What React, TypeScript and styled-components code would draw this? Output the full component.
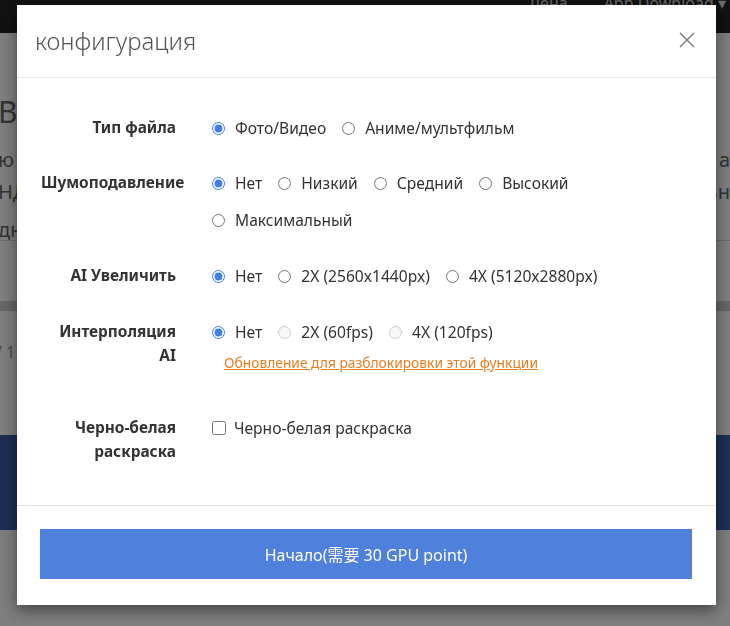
import React from 'react'
import styled, { createGlobalStyle } from 'styled-components'

const GlobalStyle = createGlobalStyle`
  html, body {
    margin: 0;
    padding: 0;
  }
  body {
    width: 730px;
    height: 626px;
    overflow: hidden;
    font-family: "Noto Sans", "Noto Sans CJK SC", sans-serif;
    background: #fff;
  }
`

/* page behind the dialog */
const Page = styled.div`
  width: 730px;
  height: 626px;
  overflow: hidden;
`

const TopBar = styled.div`
  height: 33px;
  background: #242424;
  display: flex;
  justify-content: flex-end;
  align-items: flex-start;
  gap: 36px;
  padding-right: 4px;
  overflow: hidden;
`

const NavItem = styled.span`
  color: #d8d8d8;
  font-size: 16px;
  line-height: 16px;
  margin-top: -5px;
  white-space: nowrap;
`

const Hero = styled.div`
  padding-top: 62px;
  height: 145px;
`

const HeroLine = styled.div<{ $size: number; $top: number }>`
  display: flex;
  justify-content: space-between;
  font-size: ${p => p.$size}px;
  line-height: ${p => p.$size + 4}px;
  margin-top: ${p => p.$top}px;
  color: #666;
  white-space: nowrap;
  margin-left: -2px;
`

const Divider = styled.div`
  height: 1px;
  background: #dcdcdc;
`

const Band = styled.div`
  height: 10px;
  margin-top: 60px;
  background: #cfcfcf;
`

const Pager = styled.div`
  margin-top: 30px;
  font-size: 16px;
  color: #999;
  margin-left: -4px;
`

const Navy = styled.div`
  margin-top: 72px;
  height: 95px;
  background: #3c5eae;
`

/* overlay + dialog */
const Overlay = styled.div`
  position: fixed;
  inset: 0;
  background: rgba(0, 0, 0, 0.5);
  display: flex;
  justify-content: center;
  align-items: flex-start;
  padding-top: 5px;
`

const Modal = styled.div`
  width: 699px;
  margin-left: 3px;
  background: #fff;
  box-shadow: 0 5px 15px rgba(0, 0, 0, 0.5);
`

const Header = styled.div`
  height: 73px;
  box-sizing: border-box;
  border-bottom: 1px solid #e5e5e5;
  display: flex;
  align-items: center;
  justify-content: space-between;
  padding: 0 20px 2px 18px;
`

const Title = styled.h4`
  margin: 0;
  font-size: 24px;
  font-weight: 300;
  color: #555;
`

const Close = styled.button`
  border: none;
  background: none;
  padding: 0;
  width: 18px;
  height: 18px;
  display: flex;
  cursor: pointer;
`

const Body = styled.div`
  padding: 38px 24px 41px 24px;
`

const Row = styled.div<{ $gap?: number }>`
  display: grid;
  grid-template-columns: 135px 1fr;
  column-gap: 36px;
  margin-bottom: ${p => p.$gap ?? 32}px;
  &:last-child {
    margin-bottom: 0;
  }
`

const Label = styled.div`
  text-align: right;
  font-weight: 700;
  font-size: 15.4px;
  line-height: 24px;
  color: #333;
`

const Options = styled.div`
  display: flex;
  flex-wrap: wrap;
  column-gap: 16px;
  row-gap: 13px;
`

const Option = styled.label<{ $disabled?: boolean }>`
  display: inline-flex;
  align-items: center;
  height: 24px;
  font-size: 15.6px;
  color: #333;
  white-space: nowrap;
  cursor: ${p => (p.$disabled ? 'not-allowed' : 'pointer')};
`

const Radio = styled.input.attrs({ type: 'radio' })`
  margin: 0 10px 0 0;
  width: 13px;
  height: 13px;
  accent-color: #3f7fea;
`

const Check = styled.input.attrs({ type: 'checkbox' })`
  margin: 0 8px 0 0;
  width: 14px;
  height: 14px;
`

const UpgradeLink = styled.a`
  display: block;
  margin: 9px 0 0 12px;
  font-size: 13.8px;
  line-height: 20px;
  color: #e67e22;
  text-decoration: underline;
`

const Footer = styled.div`
  border-top: 1px solid #e5e5e5;
  padding: 23px 24px 26px 23px;
`

const StartButton = styled.button`
  width: 100%;
  height: 50px;
  border: none;
  background: #4f80dc;
  color: #fff;
  font-family: "Noto Sans", "Noto Sans CJK SC", sans-serif;
  font-size: 16px;
  cursor: pointer;
`

type Choice = { label: string; disabled?: boolean }

const RadioGroup = ({ name, choices, value }: { name: string; choices: Choice[]; value: number }) => (
  <Options>
    {choices.map((c, i) => (
      <Option key={c.label} $disabled={c.disabled}>
        <Radio name={name} defaultChecked={i === value} disabled={c.disabled} />
        {c.label}
      </Option>
    ))}
  </Options>
)

export default function App() {
  return (
    <>
      <GlobalStyle />
      <Page>
        <TopBar>
          <NavItem>цена</NavItem>
          <NavItem>App Download ▾</NavItem>
        </TopBar>
        <Hero>
          <HeroLine $size={30} $top={0}>
            <span>В</span>
          </HeroLine>
          <HeroLine $size={20} $top={19}>
            <span>ю</span>
            <span>а</span>
          </HeroLine>
          <HeroLine $size={20} $top={8}>
            <span>НД</span>
            <span>ьн</span>
          </HeroLine>
          <HeroLine $size={20} $top={14}>
            <span>дн</span>
          </HeroLine>
        </Hero>
        <Divider />
        <Band />
        <Pager>/ 1</Pager>
        <Navy />
      </Page>

      <Overlay>
        <Modal>
          <Header>
            <Title>конфигурация</Title>
            <Close aria-label="close">
              <svg width="18" height="18" viewBox="0 0 18 18">
                <path d="M2 2 L16 16 M16 2 L2 16" stroke="#777" strokeWidth="1.4" fill="none" />
              </svg>
            </Close>
          </Header>

          <Body>
            <Row $gap={31}>
              <Label>Тип файла</Label>
              <RadioGroup name="type" value={0} choices={[{ label: 'Фото/Видео' }, { label: 'Аниме/мультфильм' }]} />
            </Row>
            <Row>
              <Label>Шумоподавление</Label>
              <RadioGroup
                name="noise"
                value={0}
                choices={[
                  { label: 'Нет' },
                  { label: 'Низкий' },
                  { label: 'Средний' },
                  { label: 'Высокий' },
                  { label: 'Максимальный' },
                ]}
              />
            </Row>
            <Row>
              <Label>AI Увеличить</Label>
              <RadioGroup
                name="scale"
                value={0}
                choices={[{ label: 'Нет' }, { label: '2X (2560x1440px)' }, { label: '4X (5120x2880px)' }]}
              />
            </Row>
            <Row $gap={43}>
              <Label>
                Интерполяция
                <br />
                AI
              </Label>
              <div>
                <RadioGroup
                  name="fps"
                  value={0}
                  choices={[{ label: 'Нет' }, { label: '2X (60fps)', disabled: true }, { label: '4X (120fps)', disabled: true }]}
                />
                <UpgradeLink href="#">Обновление для разблокировки этой функции</UpgradeLink>
              </div>
            </Row>
            <Row>
              <Label>
                Черно-белая
                <br />
                раскраска
              </Label>
              <Options>
                <Option>
                  <Check />
                  Черно-белая раскраска
                </Option>
              </Options>
            </Row>
          </Body>

          <Footer>
            <StartButton>Начало(需要 30 GPU point)</StartButton>
          </Footer>
        </Modal>
      </Overlay>
    </>
  )
}
